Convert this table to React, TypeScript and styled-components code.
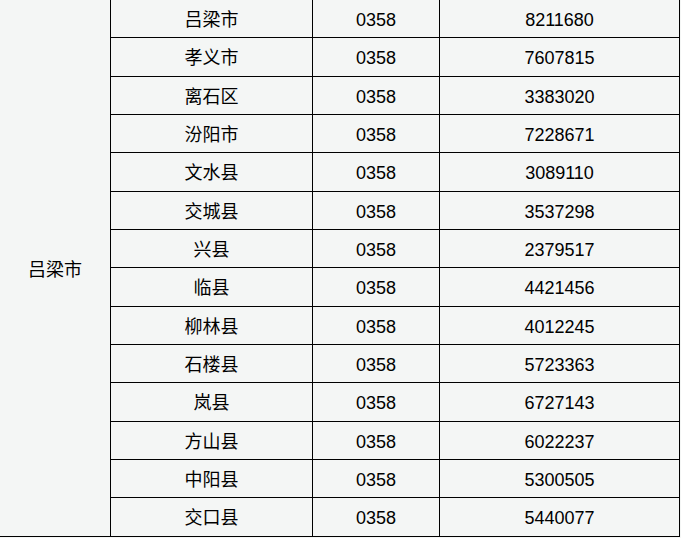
import React from 'react'
import styled, { createGlobalStyle } from 'styled-components'

const rows: [string, string, string][] = [
  ['吕梁市', '0358', '8211680'],
  ['孝义市', '0358', '7607815'],
  ['离石区', '0358', '3383020'],
  ['汾阳市', '0358', '7228671'],
  ['文水县', '0358', '3089110'],
  ['交城县', '0358', '3537298'],
  ['兴县', '0358', '2379517'],
  ['临县', '0358', '4421456'],
  ['柳林县', '0358', '4012245'],
  ['石楼县', '0358', '5723363'],
  ['岚县', '0358', '6727143'],
  ['方山县', '0358', '6022237'],
  ['中阳县', '0358', '5300505'],
  ['交口县', '0358', '5440077'],
]

const colWidths = [111, 202, 127, 240]

const GlobalStyle = createGlobalStyle`
  html, body {
    margin: 0;
    padding: 0;
    background: #f4f6f5;
  }
`

const Page = styled.div`
  width: 681px;
  height: 538px;
  overflow: hidden;
  background: #f4f6f5;
`

const Table = styled.table`
  border-collapse: collapse;
  table-layout: fixed;
  width: 680px;
  margin-top: -1px;
  margin-left: -1px;
  font-family: "Liberation Sans", "Noto Sans CJK SC", sans-serif;
  font-size: 18px;
  color: #000;
`

const Col = styled.col<{ $w: number }>`
  width: ${p => p.$w}px;
`

const Row = styled.tr`
  height: 38.333px;
`

const Cell = styled.td`
  border: 1px solid #000;
  text-align: center;
  vertical-align: middle;
  padding: 3px 0 0;
  line-height: 1;
`

const CityCell = styled(Cell)`
  padding-top: 5px;
`

const App = () => {
  return (
    <Page>
      <GlobalStyle />
      <Table>
        <colgroup>
          {colWidths.map((w, i) => (
            <Col key={i} $w={w} />
          ))}
        </colgroup>
        <tbody>
          {rows.map(([name, code, phone], i) => (
            <Row key={name}>
              {i === 0 && <CityCell rowSpan={rows.length}>吕梁市</CityCell>}
              <Cell>{name}</Cell>
              <Cell>{code}</Cell>
              <Cell>{phone}</Cell>
            </Row>
          ))}
        </tbody>
      </Table>
    </Page>
  )
}

export default App
